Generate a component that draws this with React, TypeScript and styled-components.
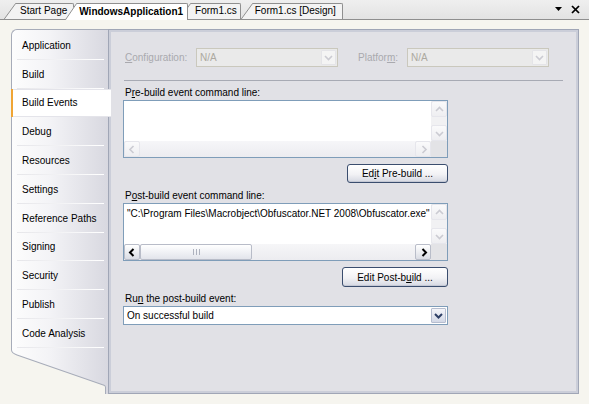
import React from "react";
import styled, { createGlobalStyle } from "styled-components";

const Global = createGlobalStyle`
  html, body { margin: 0; padding: 0; }
  body {
    width: 589px; height: 404px; overflow: hidden;
    background: #F6F5EF;
    font-family: "Liberation Sans", Arial, sans-serif;
    font-size: 10px; color: #000;
  }
  * { box-sizing: border-box; }
`;

const Frame = styled.div`
  width: 589px; height: 404px;
  display: flex; flex-direction: column;
  background: #F6F5EF;
`;

/* ---------- tab strip ---------- */
const TabStrip = styled.div`
  height: 20px; flex: none;
  display: flex; align-items: flex-end;
  padding: 0 9px 0 4px;
  background: linear-gradient(#EFEFEF, #E3E3E3);
  border-bottom: 1px solid #8F8F8F;
`;

const TabWrap = styled.div<{ $active?: boolean; $z: number; $ml: number }>`
  display: flex; align-items: stretch;
  height: ${p => (p.$active ? 17 : 16)}px;
  margin-bottom: ${p => (p.$active ? -1 : 0)}px;
  margin-left: ${p => p.$ml}px;
  z-index: ${p => p.$z};
`;

const TabFace = styled.div<{ $active?: boolean; $pl: number; $pr: number }>`
  display: flex; align-items: center;
  padding: 0 ${p => p.$pr}px 1px ${p => p.$pl}px;
  background: ${p => (p.$active ? "#FFFFFF" : "#F3F3F3")};
  border-top: 1px solid #8F8F8F;
  border-right: 1px solid #8F8F8F;
  border-top-right-radius: 2px;
  font-weight: ${p => (p.$active ? "bold" : "normal")};
  white-space: nowrap;
  line-height: 12px;
`;

const StripIcons = styled.div`
  margin-left: auto; align-self: center;
  display: flex; align-items: center; gap: 9px;
  padding-bottom: 1px;
`;

function Tab({ label, active, z, ml, pl, pr }: { label: string; active?: boolean; z: number; ml: number; pl: number; pr: number }) {
  const h = active ? 17 : 16;
  const fill = active ? "#FFFFFF" : "#F3F3F3";
  return (
    <TabWrap $active={active} $z={z} $ml={ml}>
      <svg width="12" height={h} viewBox={`0 0 12 ${h}`} style={{ display: "block" }}>
        <polygon points={`0,${h} 11.5,0 12,0 12,${h}`} fill={fill} />
        <line x1="0.3" y1={h} x2="11.6" y2="0.5" stroke="#8F8F8F" strokeWidth="1" />
        <line x1="11.4" y1="0.5" x2="12" y2="0.5" stroke="#8F8F8F" strokeWidth="1" />
      </svg>
      <TabFace $active={active} $pl={pl} $pr={pr}>{label}</TabFace>
    </TabWrap>
  );
}

/* ---------- body ---------- */
const Body = styled.div`
  flex: 1; display: flex;
  padding: 9px 10px 10px 11px;
`;

const Nav = styled.div`
  width: 97px; flex: none;
  display: flex; flex-direction: column;
  z-index: 2;
`;

const NavList = styled.div`
  border-left: 1px solid #A7ACB9;
  border-top: 1px solid #A7ACB9;
  border-top-left-radius: 6px;
  padding-top: 1px;
  background: linear-gradient(to right, #FDFDFD 0%, #F3F3F6 40%, #D8D8E0 100%);
  display: flex; flex-direction: column;
`;

const NavItem = styled.div<{ $active?: boolean }>`
  position: relative;
  height: 28.8px;
  display: flex; align-items: center;
  padding-left: ${p => (p.$active ? 11 : 10)}px;
  margin-left: ${p => (p.$active ? -1 : 0)}px;
  margin-right: ${p => (p.$active ? -3 : 0)}px;
  background: ${p => (p.$active ? "#FFFFFF" : "transparent")};
  box-shadow: ${p => (p.$active ? "inset 2px 0 0 #F0A534, inset 0 1px 0 #E4E4EA, inset 0 -1px 0 #E4E4EA" : "none")};
  white-space: nowrap;
  &::after {
    content: "";
    display: ${p => (p.$active ? "none" : "block")};
    position: absolute; left: 5px; right: 4px; bottom: 0; height: 1px;
    background: linear-gradient(to right, #E6E6EA, #FFFFFF);
  }
`;

const NavFoot = styled.svg`
  display: block; flex: 1; width: 97px;
`;

/* ---------- panel ---------- */
const Panel = styled.div`
  flex: 1;
  border: 1px solid #A0A6B6;
  box-shadow: inset 0 0 0 2px #CBCED9;
  background: #E1E1E6;
  padding: 18px 15px 0 14px;
  display: flex; flex-direction: column;
`;

const ConfigRow = styled.div`
  display: flex; align-items: center; height: 19px;
`;

const FieldLabel = styled.span<{ $w?: number; $dim?: boolean; $gap?: number }>`
  display: block;
  width: ${p => (p.$w ? `${p.$w}px` : "auto")};
  margin-left: ${p => (p.$gap ?? 2)}px;
  color: ${p => (p.$dim ? "#A9A9AE" : "#000")};
  line-height: 12px;
  white-space: nowrap;
`;

const U = styled.span`text-decoration: underline;`;

const SelectBox = styled.div<{ $w: number; $disabled?: boolean }>`
  width: ${p => p.$w}px; height: 19px;
  display: flex; align-items: stretch;
  border: 1px solid ${p => (p.$disabled ? "#CAC8BD" : "#7F9DB9")};
  background: ${p => (p.$disabled ? "#EAEAEA" : "#FFFFFF")};
  padding: 1px;
`;

const SelectText = styled.span<{ $disabled?: boolean }>`
  flex: 1; display: flex; align-items: center;
  padding-left: 2px;
  color: ${p => (p.$disabled ? "#ACA9A0" : "#000")};
`;

const DropBtn = styled.div<{ $disabled?: boolean }>`
  width: 15px;
  display: flex; align-items: center; justify-content: center;
  border: 1px solid ${p => (p.$disabled ? "#E4E4E8" : "#B6BDCF")};
  border-radius: 1px;
  background: ${p => (p.$disabled ? "#F4F4F4" : "linear-gradient(#F4F5FA, #D3D8E6)")};
`;

const Rule = styled.div`
  height: 1px; margin-top: 13px;
  margin-left: 1px;
  background: #A7AAB4;
`;

const Section = styled.div`
  width: 325px;
  display: flex; flex-direction: column;
`;

const Gap = styled.div<{ $h: number }>`height: ${p => p.$h}px; flex: none;`;

const TextBox = styled.div`
  height: 58px;
  border: 1px solid #7F9DB9;
  background: #FFFFFF;
  display: grid;
  grid-template-columns: 1fr 16px;
  grid-template-rows: 1fr 16px;
`;

const TextContent = styled.div`
  padding: 3px 0 0 3px;
  line-height: 13px;
  white-space: nowrap; overflow: hidden;
`;

const VScroll = styled.div`
  display: flex; flex-direction: column;
  background: #F1F1F3;
`;

const HScroll = styled.div`
  display: flex; align-items: stretch;
  background: linear-gradient(#F6F6F8, #ECECF0);
`;

const Corner = styled.div`
  background: #E3E3E6;
`;

const ScrollBtn = styled.div<{ $on?: boolean }>`
  width: 16px; height: 16px; flex: none;
  display: flex; align-items: center; justify-content: center;
  border: 1px solid ${p => (p.$on ? "#B9BDC9" : "#E6E6EC")};
  border-radius: 2px;
  background: ${p => (p.$on ? "linear-gradient(#FFFFFF, #DADCE4)" : "linear-gradient(#FAFAFB, #EEEEF1)")};
`;

const Track = styled.div`
  flex: 1; display: flex;
`;

const Thumb = styled.div<{ $w: number }>`
  width: ${p => p.$w}px;
  display: flex; align-items: center; justify-content: center;
  border: 1px solid #B8BCC8;
  border-radius: 2px;
  background: linear-gradient(#FFFFFF, #E2E4EB);
`;

const ButtonRow = styled.div`
  display: flex; justify-content: flex-end;
`;

const PushButton = styled.div<{ $w: number; $h: number }>`
  width: ${p => p.$w}px; height: ${p => p.$h}px;
  display: flex; align-items: center; justify-content: center;
  border: 1px solid #3A4D6E;
  border-radius: 3px;
  background: linear-gradient(#FFFFFF 0%, #F2F2F5 55%, #D5D8E2 100%);
  box-shadow: inset 0 -1px 0 #C4C8D4;
  white-space: nowrap;
`;

type Dir = "left" | "right" | "up" | "down";
const chevron: Record<Dir, string> = {
  left: "5.5,1 2,4.5 5.5,8",
  right: "3.5,1 7,4.5 3.5,8",
  up: "1,6 4.5,2.5 8,6",
  down: "1,3 4.5,6.5 8,3",
};

function Chevron({ dir, color, w = 1.6 }: { dir: Dir; color: string; w?: number }) {
  return (
    <svg width="9" height="9" viewBox="0 0 9 9" style={{ display: "block" }}>
      <polyline points={chevron[dir]} fill="none" stroke={color} strokeWidth={w} />
    </svg>
  );
}

function Grip() {
  return (
    <svg width="7" height="6" viewBox="0 0 7 6" style={{ display: "block" }}>
      <line x1="0.5" y1="0" x2="0.5" y2="6" stroke="#AEB2BE" />
      <line x1="3.5" y1="0" x2="3.5" y2="6" stroke="#AEB2BE" />
      <line x1="6.5" y1="0" x2="6.5" y2="6" stroke="#AEB2BE" />
    </svg>
  );
}

const OFF = "#CBCBD2";

function CommandBox({ text, active }: { text?: string; active?: boolean }) {
  return (
    <TextBox>
      <TextContent>{text}</TextContent>
      <VScroll>
        <ScrollBtn><Chevron dir="up" color={OFF} /></ScrollBtn>
        <Track />
        <ScrollBtn><Chevron dir="down" color={OFF} /></ScrollBtn>
      </VScroll>
      <HScroll>
        <ScrollBtn $on={active}><Chevron dir="left" color={active ? "#000" : OFF} w={active ? 2 : 1.6} /></ScrollBtn>
        <Track>{active && <Thumb $w={112}><Grip /></Thumb>}</Track>
        <ScrollBtn $on={active}><Chevron dir="right" color={active ? "#000" : OFF} w={active ? 2 : 1.6} /></ScrollBtn>
      </HScroll>
      <Corner />
    </TextBox>
  );
}

const navItems = [
  "Application", "Build", "Build Events", "Debug", "Resources", "Settings",
  "Reference Paths", "Signing", "Security", "Publish", "Code Analysis",
];

export default function App() {
  return (
    <Frame>
      <Global />
      <TabStrip>
        <Tab label="Start Page" z={4} ml={0} pl={4} pr={6} />
        <Tab label="WindowsApplication1" active z={10} ml={-9} pl={2} pr={4} />
        <Tab label="Form1.cs" z={3} ml={-9} pl={4} pr={3} />
        <Tab label="Form1.cs [Design]" z={2} ml={0} pl={2} pr={6} />
        <StripIcons>
          <svg width="7" height="4" viewBox="0 0 7 4" style={{ display: "block" }}>
            <polygon points="0,0 7,0 3.5,4" fill="#000" />
          </svg>
          <svg width="9" height="9" viewBox="0 0 9 9" style={{ display: "block" }}>
            <line x1="1" y1="1" x2="8" y2="8" stroke="#000" strokeWidth="1.7" />
            <line x1="8" y1="1" x2="1" y2="8" stroke="#000" strokeWidth="1.7" />
          </svg>
        </StripIcons>
      </TabStrip>

      <Body>
        <Nav>
          <NavList>
            {navItems.map(n => (
              <NavItem key={n} $active={n === "Build Events"}>{n}</NavItem>
            ))}
          </NavList>
          <NavFoot viewBox="0 0 97 46" preserveAspectRatio="none">
            <defs>
              <linearGradient id="navg" x1="0" y1="0" x2="1" y2="0">
                <stop offset="0" stopColor="#FDFDFD" />
                <stop offset="0.4" stopColor="#F3F3F6" />
                <stop offset="1" stopColor="#D8D8E0" />
              </linearGradient>
            </defs>
            <path d="M0,0 H97 V46 H94.5 V39 Q94.5,37.5 93,37 L6,7 Q0.5,5 0.5,2 V0 Z" fill="url(#navg)" />
            <path d="M0.5,0 V2 Q0.5,5 6,7 L93,37 Q94.5,37.5 94.5,39 V46" fill="none" stroke="#A7ACB9" strokeWidth="1" />
          </NavFoot>
        </Nav>

        <Panel>
          <ConfigRow>
            <FieldLabel $w={71} $dim><U>C</U>onfiguration:</FieldLabel>
            <SelectBox $w={142} $disabled>
              <SelectText $disabled>N/A</SelectText>
              <DropBtn $disabled><Chevron dir="down" color={OFF} /></DropBtn>
            </SelectBox>
            <FieldLabel $w={49} $dim $gap={20}>Platfor<U>m</U>:</FieldLabel>
            <SelectBox $w={142} $disabled>
              <SelectText $disabled>N/A</SelectText>
              <DropBtn $disabled><Chevron dir="down" color={OFF} /></DropBtn>
            </SelectBox>
          </ConfigRow>
          <Rule />

          <Section>
            <Gap $h={6} />
            <FieldLabel>P<U>r</U>e-build event command line:</FieldLabel>
            <Gap $h={1} />
            <CommandBox />
            <Gap $h={6} />
            <ButtonRow>
              <PushButton $w={101} $h={19}>Ed<U>i</U>t Pre-build ...</PushButton>
            </ButtonRow>
            <Gap $h={7} />
            <FieldLabel>P<U>o</U>st-build event command line:</FieldLabel>
            <Gap $h={1} />
            <CommandBox active text={'"C:\\Program Files\\Macrobject\\Obfuscator.NET 2008\\Obfuscator.exe"'} />
            <Gap $h={6} />
            <ButtonRow>
              <PushButton $w={106} $h={20}>Edit Post-b<U>u</U>ild ...</PushButton>
            </ButtonRow>
            <Gap $h={6} />
            <FieldLabel>Ru<U>n</U> the post-build event:</FieldLabel>
            <Gap $h={1} />
            <SelectBox $w={325}>
              <SelectText>On successful build</SelectText>
              <DropBtn><Chevron dir="down" color="#2E3F66" w={2} /></DropBtn>
            </SelectBox>
          </Section>
        </Panel>
      </Body>
    </Frame>
  );
}
